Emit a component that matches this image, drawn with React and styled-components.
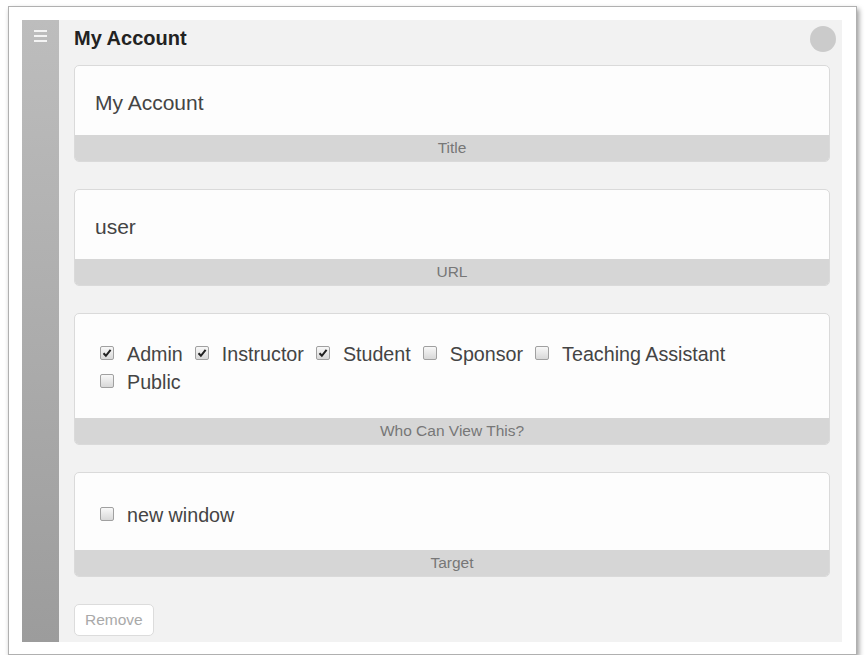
import React, { useState } from 'react';
import styled, { createGlobalStyle } from 'styled-components';

const GlobalStyle = createGlobalStyle`
  body {
    margin: 0;
    background: #fff;
    font-family: 'Liberation Sans', Arial, sans-serif;
  }
`;

const Frame = styled.div`
  margin: 6px 0 0 8px;
  width: 849px;
  height: 649px;
  box-sizing: border-box;
  border: 1px solid #b0b0b0;
  box-shadow: 2px 3px 5px rgba(0, 0, 0, 0.4);
  background: #fff;
  padding: 13px 14px 12px 13px;
`;

const Panel = styled.div`
  display: flex;
  height: 100%;
  background: #f2f2f2;
`;

const Handle = styled.div`
  width: 37px;
  flex-shrink: 0;
  background: linear-gradient(to bottom, #bdbdbd, #9c9c9c);
  display: flex;
  justify-content: center;
  padding-top: 9px;
  box-sizing: border-box;
`;

const Content = styled.div`
  flex: 1;
  padding: 0 12px 0 15px;
  display: flex;
  flex-direction: column;
`;

const Header = styled.div`
  height: 45px;
  display: flex;
  align-items: center;
  justify-content: space-between;
`;

const Heading = styled.h2`
  margin: 0;
  font-size: 20px;
  font-weight: bold;
  color: #222;
  position: relative;
  top: -4px;
`;

const Dot = styled.span`
  width: 26px;
  height: 26px;
  border-radius: 50%;
  background: #cbcbcb;
  margin-right: -6px;
  position: relative;
  top: -4px;
`;

const Card = styled.div`
  background: #fdfdfd;
  border: 1px solid #dadada;
  border-radius: 5px;
  overflow: hidden;
  margin-bottom: 27px;
`;

const CardBody = styled.div`
  padding: ${(p) => p.$pad};
  font-size: ${(p) => p.$size || '19.7px'};
  line-height: 28px;
  color: #444;
`;

const CardLabel = styled.div`
  height: 26px;
  line-height: 26px;
  background: #d6d6d6;
  text-align: center;
  font-size: 15.5px;
  color: #777;
`;

const Options = styled.div`
  display: flex;
  flex-wrap: wrap;
  column-gap: 12px;
`;

const Option = styled.label`
  display: inline-flex;
  align-items: center;
  gap: 13px;
  cursor: pointer;
`;

const Box = styled.span`
  width: 14px;
  height: 14px;
  box-sizing: border-box;
  border: 1px solid #a0a0a0;
  border-radius: 2px;
  background: linear-gradient(to bottom, #f8f8f8, #d8d8d8);
  display: inline-flex;
  align-items: center;
  justify-content: center;
  position: relative;
  top: -1px;
`;

const RemoveButton = styled.button`
  align-self: flex-start;
  height: 32px;
  padding: 0 10px;
  background: #fff;
  border: 1px solid #dcdcdc;
  border-radius: 5px;
  font-family: inherit;
  font-size: 15.5px;
  color: #a9a9a9;
`;

const Check = ({ checked, label, onToggle }) => (
  <Option onClick={onToggle}>
    <Box>
      {checked && (
        <svg width="10" height="10" viewBox="0 0 10 10">
          <path d="M1.5 5.2 L3.9 7.8 L8.6 1.8" fill="none" stroke="#222" strokeWidth="2" />
        </svg>
      )}
    </Box>
    {label}
  </Option>
);

const MenuIcon = () => (
  <svg width="14" height="14" viewBox="0 0 14 14">
    <rect x="0" y="1" width="13" height="2" fill="#f4f4f4" />
    <rect x="0" y="6" width="13" height="2" fill="#f4f4f4" />
    <rect x="0" y="11" width="13" height="2" fill="#f4f4f4" />
  </svg>
);

const roles = ['Admin', 'Instructor', 'Student', 'Sponsor', 'Teaching Assistant', 'Public'];

export default function App() {
  const [viewers, setViewers] = useState({ Admin: true, Instructor: true, Student: true });
  const [newWindow, setNewWindow] = useState(false);

  const toggle = (r) => setViewers((v) => ({ ...v, [r]: !v[r] }));

  return (
    <>
      <GlobalStyle />
      <Frame>
        <Panel>
          <Handle>
            <MenuIcon />
          </Handle>
          <Content>
            <Header>
              <Heading>My Account</Heading>
              <Dot />
            </Header>

            <Card>
              <CardBody $pad="23px 20px 18px" $size="21px">My Account</CardBody>
              <CardLabel>Title</CardLabel>
            </Card>

            <Card>
              <CardBody $pad="23px 20px 18px" $size="21px">user</CardBody>
              <CardLabel>URL</CardLabel>
            </Card>

            <Card>
              <CardBody $pad="26px 25px 22px">
                <Options>
                  {roles.map((r) => (
                    <Check key={r} label={r} checked={!!viewers[r]} onToggle={() => toggle(r)} />
                  ))}
                </Options>
              </CardBody>
              <CardLabel>Who Can View This?</CardLabel>
            </Card>

            <Card>
              <CardBody $pad="28px 25px 21px">
                <Check label="new window" checked={newWindow} onToggle={() => setNewWindow(!newWindow)} />
              </CardBody>
              <CardLabel>Target</CardLabel>
            </Card>

            <RemoveButton>Remove</RemoveButton>
          </Content>
        </Panel>
      </Frame>
    </>
  );
}
